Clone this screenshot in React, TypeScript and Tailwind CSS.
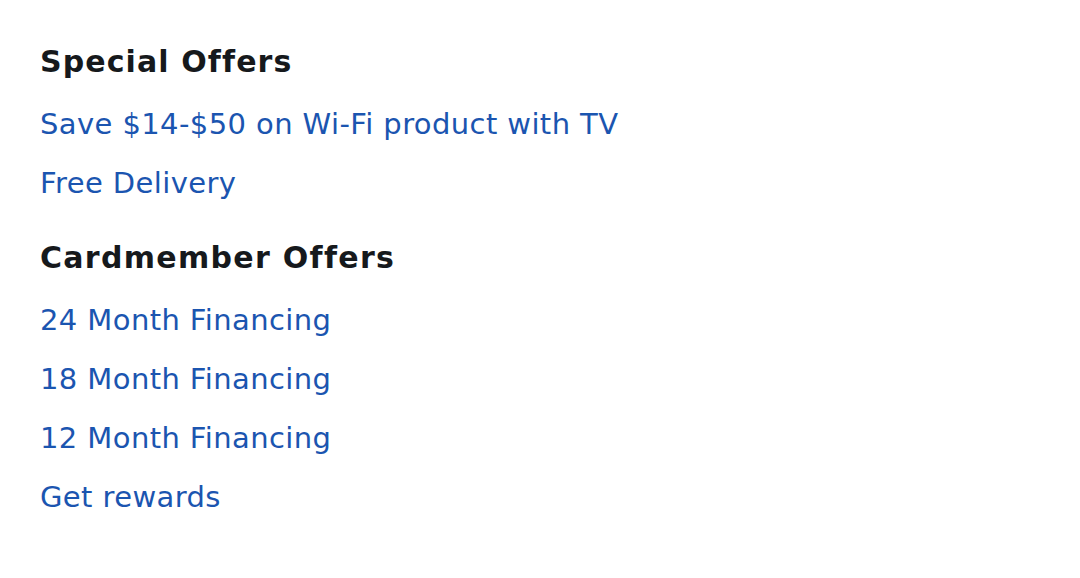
import React from "react";

const special = ["Save $14-$50 on Wi-Fi product with TV", "Free Delivery"];
const card = ["24 Month Financing", "18 Month Financing", "12 Month Financing", "Get rewards"];

export default function App() {
  return (
    <div
      className="w-[1080px] h-[578px] bg-white pl-[40px] pt-[40px]"
      style={{ fontFamily: "'DejaVu Sans', 'Open Sans', sans-serif" }}
    >
      <h2 className="text-[30px] leading-[44px] font-bold tracking-[1.1px] text-[#16191c]">Special Offers</h2>
      <ul className="mt-[11px]">
        {special.map((t) => (
          <li key={t} className="text-[29px] leading-[59px] tracking-[0.4px] text-[#1b55b0]">{t}</li>
        ))}
      </ul>
      <h2 className="text-[30px] leading-[44px] font-bold tracking-[1.3px] text-[#16191c] mt-[23px]">Cardmember Offers</h2>
      <ul className="mt-[11px]">
        {card.map((t) => (
          <li key={t} className="text-[29px] leading-[59px] tracking-[0.4px] text-[#1b55b0]">{t}</li>
        ))}
      </ul>
    </div>
  );
}
